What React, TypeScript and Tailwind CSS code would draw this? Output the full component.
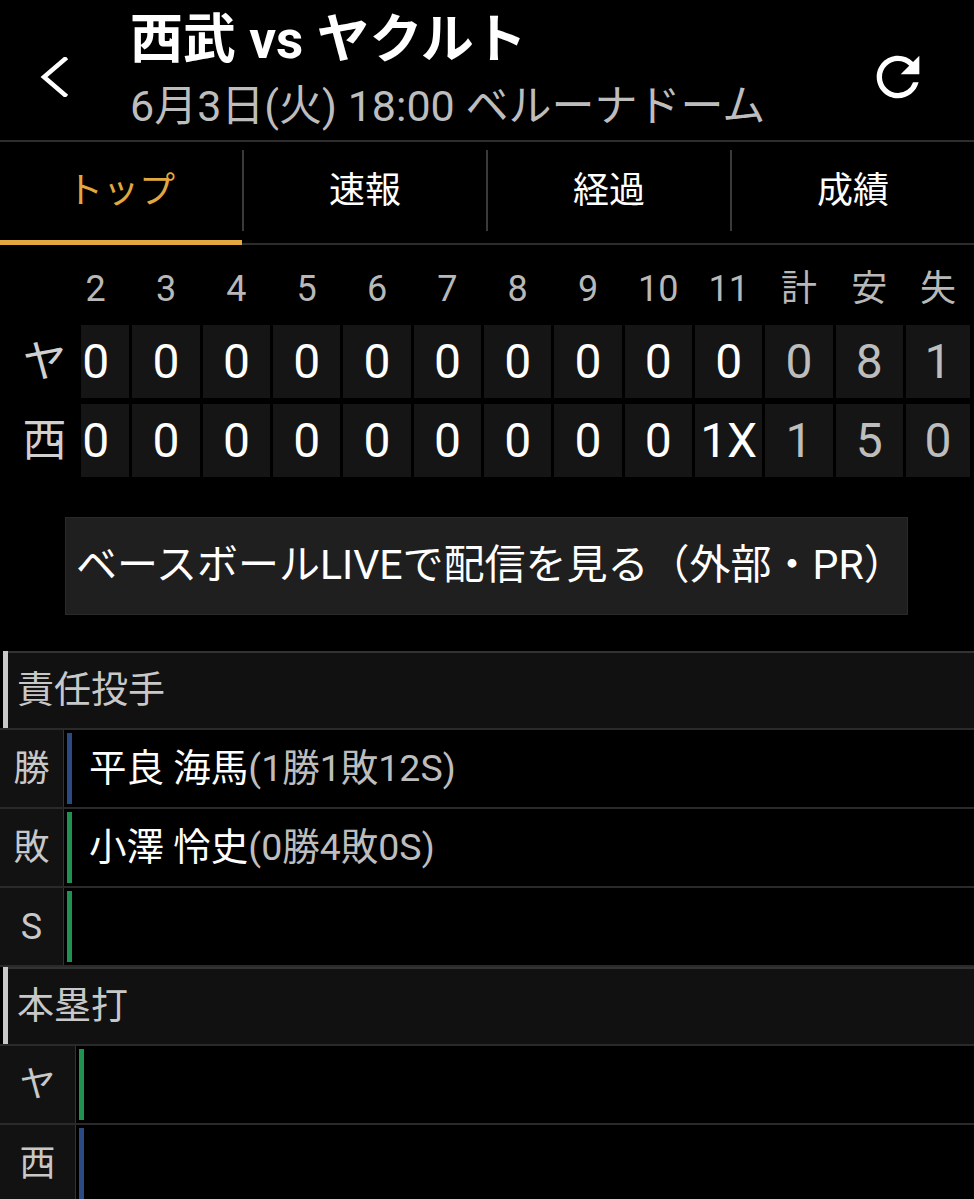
import React from "react";

const FONT = { fontFamily: 'Roboto, "Noto Sans CJK JP", sans-serif' };

const heads = ["2", "3", "4", "5", "6", "7", "8", "9", "10", "11", "計", "安", "失"];

const teams = [
  {
    label: "ヤ",
    cells: ["0", "0", "0", "0", "0", "0", "0", "0", "0", "0", "0", "8", "1"],
  },
  {
    label: "西",
    cells: ["0", "0", "0", "0", "0", "0", "0", "0", "0", "1X", "1", "5", "0"],
  },
];

function Tab({ label, active }: { label: string; active?: boolean }) {
  return (
    <div className="flex-1 flex flex-col">
      <div
        className={`flex-1 flex items-center justify-center text-[36px] ${
          active ? "text-[#e2a83f]" : "text-white"
        }`}
      >
        {label}
      </div>
      <div className={`h-[5px] -mb-[2px] ${active ? "bg-[#e2a83f]" : ""}`}></div>
    </div>
  );
}

function Sep() {
  return <div className="w-[2px] h-[81px] self-center -mt-[4px] bg-[#3a3a3a]"></div>;
}

function Row({
  label,
  bar,
  labelW,
  children,
}: {
  label: string;
  bar: string;
  labelW: string;
  children?: React.ReactNode;
}) {
  return (
    <div className="flex h-[79px] border-b-2 border-[#2a2a2a]">
      <div
        className={`${labelW} shrink-0 flex items-center justify-center bg-[#121212] border-r border-[#333] text-[36px] text-[#c8c8c8]`}
      >
        {label}
      </div>
      <div className={`ml-[3px] w-[5px] shrink-0 my-[3px] ${bar}`}></div>
      <div className="flex-1 flex items-center pl-[17px] text-[37.5px]">{children}</div>
    </div>
  );
}

function SectionHead({ title }: { title: string }) {
  return (
    <div className="flex h-[79px] pl-[3px] border-b-2 border-[#2a2a2a]">
      <div className="w-[5px] shrink-0 bg-[#c8c8c8]"></div>
      <div className="flex-1 flex items-center pl-[9px] bg-[#111] border-t-2 border-[#333] text-[37px] text-[#c8c8c8]">
        {title}
      </div>
    </div>
  );
}

export default function App() {
  return (
    <div className="w-[974px] h-[1199px] overflow-hidden bg-black text-white" style={FONT}>
      {/* ヘッダー */}
      <div className="flex items-center h-[140px]">
        <div className="w-[130px] shrink-0 pl-[39px] mt-[14px]">
          <svg width="30" height="40" viewBox="0 0 30 40">
            <polyline
              points="26,2 5,20 26,38"
              fill="none"
              stroke="white"
              strokeWidth="4.5"
              strokeLinecap="square"
            />
          </svg>
        </div>
        <div className="flex-1 flex flex-col">
          <div className="text-[53px] leading-[60px] font-bold">西武 vs ヤクルト</div>
          <div className="mt-[11px] text-[43px] leading-[50px] text-[#bdbdbd]">
            6月3日(火) 18:00 ベルーナドーム
          </div>
        </div>
        <div className="pr-[44px] mt-[14px]">
          <svg width="64" height="64" viewBox="0 0 24 24" fill="white">
            <path d="M17.65 6.35A7.958 7.958 0 0 0 12 4c-4.42 0-7.990 3.58-7.990 8s3.570 8 7.990 8c3.730 0 6.840-2.550 7.730-6h-2.080A5.990 5.990 0 0 1 12 18c-3.310 0-6-2.690-6-6s2.690-6 6-6c1.660 0 3.140.69 4.220 1.780L13 11h7V4l-2.350 2.350z" />
          </svg>
        </div>
      </div>

      {/* タブ */}
      <div className="flex h-[105px] border-t-2 border-b-2 border-t-[#2e2e2e] border-b-[#2c2c2c]">
        <Tab label="トップ" active />
        <Sep />
        <Tab label="速報" />
        <Sep />
        <Tab label="経過" />
        <Sep />
        <Tab label="成績" />
      </div>

      {/* スコアボード（横スクロール） */}
      <div className="flex h-[80px] items-center pt-[8px]">
        <div className="w-[81px] shrink-0"></div>
        <div className="flex-1 flex justify-end gap-[3px] overflow-hidden pr-[4px]">
          {heads.map((h, i) => (
            <div
              key={h}
              className={`${
                i === heads.length - 1 ? "w-[64px]" : "w-[67.33px]"
              } shrink-0 text-center text-[36px] text-[#b8b8b8]`}
            >
              {h}
            </div>
          ))}
        </div>
      </div>
      <div className="flex flex-col gap-[6px]">
        {teams.map((t) => (
          <div key={t.label} className="flex h-[73px]">
            <div className="w-[81px] shrink-0 flex items-center justify-center pl-[8px] text-[44px] text-[#d0d0d0]">
              {t.label}
            </div>
            <div className="flex-1 flex justify-end gap-[3px] overflow-hidden pr-[4px]">
              {t.cells.map((c, i) => (
                <div
                  key={i}
                  className={`${
                    i === t.cells.length - 1 ? "w-[64px]" : "w-[67.33px]"
                  } shrink-0 flex items-center justify-center bg-[#151515] text-[48px] ${
                    i >= 10 ? "text-[#bdbdbd]" : "text-white"
                  }`}
                >
                  {c}
                </div>
              ))}
            </div>
          </div>
        ))}
      </div>

      {/* 配信ボタン */}
      <div className="pl-[65px] pt-[40px]">
        <div className="w-[843px] h-[98px] flex items-center pl-[10px] bg-[#1f1f1f] border border-[#2a2a2a] text-[41px] text-white">
          ベースボールLIVEで配信を見る（外部・PR）
        </div>
      </div>

      {/* 責任投手 */}
      <div className="mt-[36px]">
        <SectionHead title="責任投手" />
        <Row label="勝" bar="bg-[#2b4a84]" labelW="w-[64px]">
          <span className="text-white">平良 海馬</span>
          <span className="text-[#bdbdbd]">(1勝1敗12S)</span>
        </Row>
        <Row label="敗" bar="bg-[#1f9150]" labelW="w-[64px]">
          <span className="text-white">小澤 怜史</span>
          <span className="text-[#bdbdbd]">(0勝4敗0S)</span>
        </Row>
        <Row label="S" bar="bg-[#1f9150]" labelW="w-[64px]" />
        <SectionHead title="本塁打" />
        <Row label="ヤ" bar="bg-[#1f9150]" labelW="w-[76px]" />
        <Row label="西" bar="bg-[#2b4a84]" labelW="w-[76px]" />
      </div>
    </div>
  );
}
